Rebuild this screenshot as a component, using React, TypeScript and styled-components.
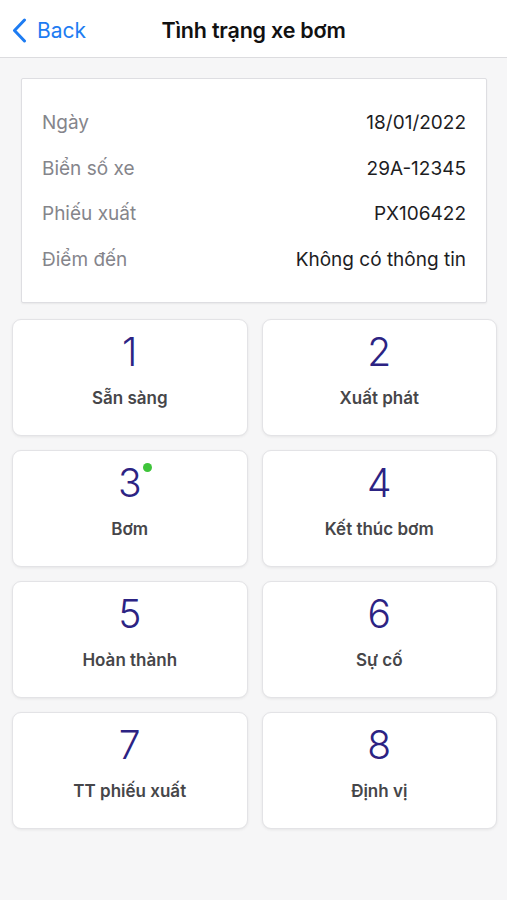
import styled, { createGlobalStyle } from "styled-components";

const GlobalStyle = createGlobalStyle`
	html, body {
		margin: 0;
		padding: 0;
		background: #f6f6f7;
		font-family: Inter, "Noto Sans", sans-serif;
		-webkit-font-smoothing: antialiased;
	}
`;

const Screen = styled.div`
	min-height: 900px;
	background: #f6f6f7;
	display: flex;
	flex-direction: column;
`;

const NavBar = styled.header`
	height: 58px;
	background: #fff;
	border-bottom: 1px solid #dcdcdf;
	display: grid;
	grid-template-columns: 1fr auto 1fr;
	align-items: center;
	padding: 3px 12px 0;
	box-sizing: border-box;
`;

const BackButton = styled.button`
	display: flex;
	align-items: center;
	gap: 10px;
	background: none;
	border: none;
	padding: 0;
	color: #1e7cf2;
	font-family: inherit;
	font-size: 21px;
	cursor: pointer;
	justify-self: start;
`;

const Title = styled.h1`
	margin: 0;
	font-size: 21.5px;
	font-weight: 600;
	color: #111;
	letter-spacing: -0.2px;
`;

const Content = styled.main`
	padding: 20px 10px 20px 12px;
	display: flex;
	flex-direction: column;
	gap: 16px;
`;

const InfoCard = styled.section`
	margin: 0 10px 0 9px;
	background: #fff;
	border: 1px solid #dedee2;
	border-radius: 2px;
	box-shadow: 0 1px 2px rgba(0, 0, 0, 0.06);
	padding: 21px 20px 20px 20px;
`;

const InfoRow = styled.div`
	height: 45.5px;
	display: flex;
	align-items: center;
	justify-content: space-between;
	font-size: 19px;
`;

const InfoLabel = styled.span`
	color: #85858b;
`;

const InfoValue = styled.span`
	color: #1d1d1f;
`;

const Grid = styled.div`
	display: grid;
	grid-template-columns: 1fr 1fr;
	grid-auto-rows: 117px;
	gap: 14px;
`;

const Tile = styled.button`
	background: #fff;
	border: 1px solid #e3e3e6;
	border-radius: 9px;
	box-shadow: 0 1px 3px rgba(0, 0, 0, 0.07);
	display: flex;
	flex-direction: column;
	align-items: center;
	padding: 11px 0 0;
	font-family: inherit;
	cursor: pointer;
`;

const StepNumber = styled.span`
	position: relative;
	font-size: 39px;
	line-height: 42px;
	font-weight: 300;
	color: #2c2383;
`;

const ActiveDot = styled.span`
	position: absolute;
	top: 1px;
	right: -10px;
	width: 9px;
	height: 9px;
	border-radius: 50%;
	background: #3ec43a;
`;

const StepLabel = styled.span`
	margin-top: 14px;
	font-size: 17px;
	line-height: 22px;
	font-weight: 600;
	color: #464649;
`;

const info = [
	["Ngày", "18/01/2022"],
	["Biển số xe", "29A-12345"],
	["Phiếu xuất", "PX106422"],
	["Điểm đến", "Không có thông tin"],
];

const steps = [
	"Sẵn sàng",
	"Xuất phát",
	"Bơm",
	"Kết thúc bơm",
	"Hoàn thành",
	"Sự cố",
	"TT phiếu xuất",
	"Định vị",
];

const activeStep = 3;

const App = () => {
	return (
		<Screen>
			<GlobalStyle />
			<NavBar>
				<BackButton>
					<svg width="15" height="25" viewBox="0 0 15 25" fill="none">
						<path
							d="M12.5 2 L2.5 12.5 L12.5 23"
							stroke="#1e7cf2"
							strokeWidth="3"
							strokeLinecap="round"
							strokeLinejoin="round"
						/>
					</svg>
					Back
				</BackButton>
				<Title>Tình trạng xe bơm</Title>
				<span />
			</NavBar>
			<Content>
				<InfoCard>
					{info.map(([label, value]) => (
						<InfoRow key={label}>
							<InfoLabel>{label}</InfoLabel>
							<InfoValue>{value}</InfoValue>
						</InfoRow>
					))}
				</InfoCard>
				<Grid>
					{steps.map((label, i) => (
						<Tile key={label}>
							<StepNumber>
								{i + 1}
								{i + 1 === activeStep && <ActiveDot />}
							</StepNumber>
							<StepLabel>{label}</StepLabel>
						</Tile>
					))}
				</Grid>
			</Content>
		</Screen>
	);
};

export default App;
